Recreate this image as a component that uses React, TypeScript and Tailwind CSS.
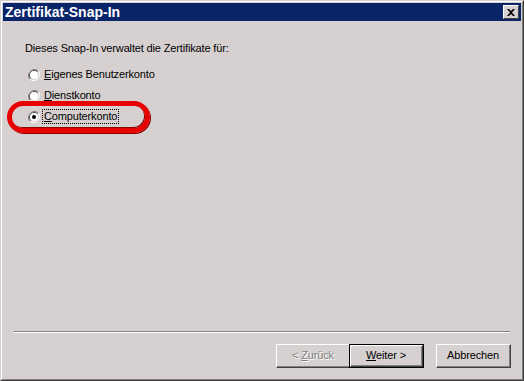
import React from "react";

const Radio = ({ checked }: { checked?: boolean }) => (
  <span className="relative inline-block w-[12px] h-[12px] shrink-0">
    <svg width="12" height="12" viewBox="0 0 12 12" className="absolute inset-0">
      <path d="M10.2 1.8A6 6 0 0 0 1.8 10.2" fill="none" stroke="#808080" strokeWidth="1" />
      <path d="M9.5 2.5A5 5 0 0 0 2.5 9.5" fill="none" stroke="#404040" strokeWidth="1" />
      <path d="M1.8 10.2A6 6 0 0 0 10.2 1.8" fill="none" stroke="#ffffff" strokeWidth="1" />
      <circle cx="6" cy="6" r="4" fill="#ffffff" />
      {checked && <circle cx="6" cy="6" r="2" fill="#000000" />}
    </svg>
  </span>
);

const Option = ({
  label,
  accel,
  checked,
  focused,
}: {
  label: string;
  accel: string;
  checked?: boolean;
  focused?: boolean;
}) => (
  <div className="flex items-center gap-[3px] h-[21px]">
    <Radio checked={checked} />
    <span
      className={
        "leading-[13px] px-[1px] " +
        (focused ? "outline outline-1 outline-dotted outline-black" : "")
      }
    >
      <span className="underline underline-offset-[1px]">{accel}</span>
      {label}
    </span>
  </div>
);

const Button = ({
  children,
  disabled,
  isDefault,
}: {
  children: React.ReactNode;
  disabled?: boolean;
  isDefault?: boolean;
}) => (
  <div className={"w-[75px] h-[24px] " + (isDefault ? "border border-black" : "")}>
    <div className="h-full w-full border-t border-l border-white border-r border-b border-r-[#404040] border-b-[#404040]">
      <div
        className={
          "h-full w-full flex items-center justify-center border-r border-b border-r-[#808080] border-b-[#808080] " +
          (disabled ? "text-[#808080] [text-shadow:1px_1px_0_#fff]" : "text-black")
        }
      >
        {children}
      </div>
    </div>
  </div>
);

export default function App() {
  return (
    <div
      className="w-[524px] h-[381px] bg-[#d6d0d0] text-[11px] tracking-[-0.15px] text-black select-none"
      style={{ fontFamily: '"Liberation Sans", Arial, sans-serif' }}
    >
      <div className="h-full w-full border-t border-l border-[#d6d0d0] border-r border-b border-r-[#404040] border-b-[#404040]">
        <div className="h-full w-full border-t border-l border-white border-r border-b border-r-[#808080] border-b-[#808080] p-[1px] flex flex-col">
          {/* title bar */}
          <div className="h-[18px] bg-[#0a246a] flex items-center justify-between pl-[2px] pr-[2px]">
            <span className="text-white font-bold text-[14px] tracking-normal leading-none">
              Zertifikat-Snap-In
            </span>
            <div className="w-[16px] h-[14px] bg-[#d6d0d0] border-t border-l border-white border-r border-b border-r-[#404040] border-b-[#404040] flex items-center justify-center">
              <svg width="8" height="7" viewBox="0 0 8 7">
                <path d="M0 0h2l2 2 2-2h2L5 3.5 8 7H6L4 5 2 7H0l3-3.5z" fill="#000" />
              </svg>
            </div>
          </div>

          {/* body */}
          <div className="flex-1 flex flex-col">
            <div className="flex-1 pl-[22px] pt-[21px]">
              <div className="leading-[13px]">
                Dieses Snap-In verwaltet die Zertifikate für:
              </div>
              <div className="mt-[9px] pl-[3px] flex flex-col">
                <Option accel="E" label="igenes Benutzerkonto" />
                <Option accel="D" label="ienstkonto" />
                <div className="relative">
                  <Option accel="C" label="omputerkonto" checked focused />
                  <div className="absolute left-[-21px] top-[-5px] w-[143px] h-[32px] rounded-full border-[5px] border-[#e80000] shadow-[inset_-1px_-1px_0_#8a0000,1px_1px_0_#8a0000]" />
                </div>
              </div>
            </div>

            <div className="mx-[11px] border-t border-[#808080] border-b border-b-white" />

            <div className="h-[45px] flex items-start justify-end pr-[10px] pt-[11px]">
              <Button disabled>
                <span>
                  &lt; <span className="underline">Z</span>urück
                </span>
              </Button>
              <div className="ml-[-2px]" />
              <Button isDefault>
                <span>
                  <span className="underline">W</span>eiter &gt;
                </span>
              </Button>
              <div className="ml-[12px]" />
              <Button>Abbrechen</Button>
            </div>
          </div>
        </div>
      </div>
    </div>
  );
}
